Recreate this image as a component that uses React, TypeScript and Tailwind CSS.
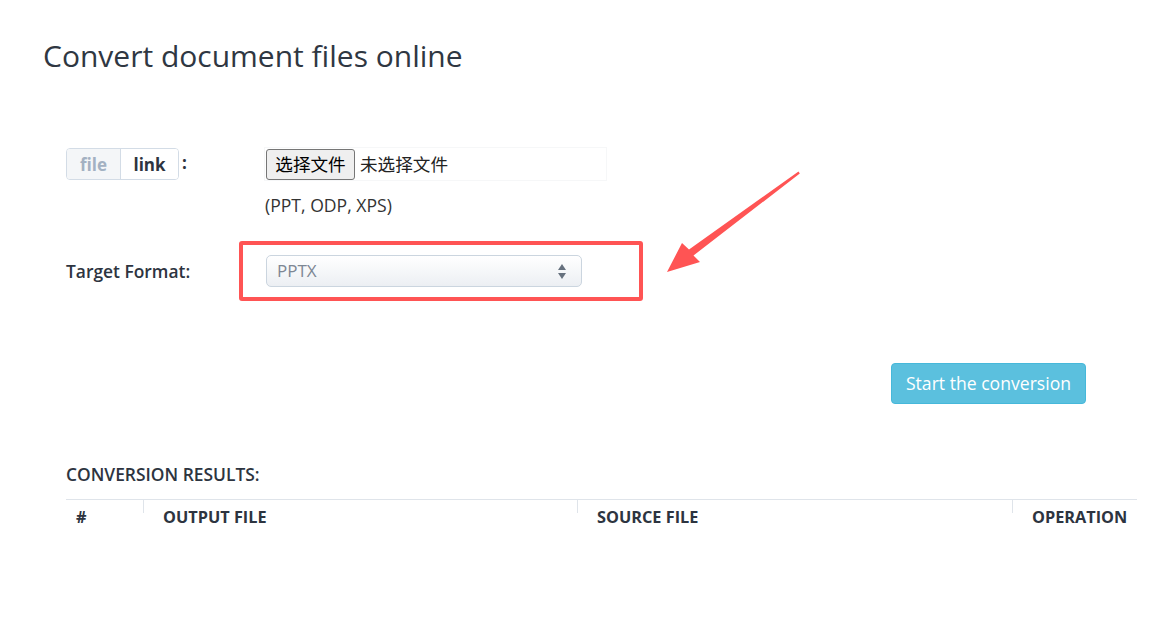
// Document converter form: upload toggle, target format picker, results table.
// The red box + arrow are screenshot annotations drawn over the page.

const font = "font-['Open_Sans','Noto_Sans_CJK_SC',sans-serif]";

function SourceToggle() {
  return (
    <div className="flex items-center">
      <div className="flex h-[32px] overflow-hidden rounded-[4px] border border-[#d3dce6] text-[17px] font-bold leading-none">
        <span className="flex w-[53px] items-center justify-center bg-[#f4f6f8] text-[#a3b1c2]">file</span>
        <span className="flex w-[58px] items-center justify-center border-l border-[#d3dce6] bg-white text-[#2d3440]">
          link
        </span>
      </div>
      <span className="ml-[3px] -mt-[3px] text-[17px] font-bold text-[#2d3440]">:</span>
    </div>
  );
}

function FileInput() {
  return (
    <div className="-ml-[2px] flex h-[34px] w-[343px] items-center border border-[#f6f7f8] pl-px">
      <span className="flex h-[31px] w-[89px] items-center justify-center rounded-[3px] border border-[#767676] bg-[#efefef] text-[17.6px] text-black">
        选择文件
      </span>
      <span className="ml-[5px] text-[17.6px] text-[#222]">未选择文件</span>
    </div>
  );
}

function FormatSelect() {
  return (
    <div className="relative">
      <div className="flex h-[32px] w-[316px] items-center justify-between rounded-[5px] border border-[#cbd5df] bg-gradient-to-b from-white to-[#eceff3] pl-[10px] pr-[14px]">
        <span className="text-[17px] text-[#7d8794]">PPTX</span>
        <svg width="10" height="17" viewBox="0 0 10 17" className="text-[#66717e]" aria-hidden>
          <path d="M5 1 L9 7 H1 Z" fill="currentColor" />
          <path d="M5 16 L9 10 H1 Z" fill="currentColor" />
        </svg>
      </div>
      {/* annotation box */}
      <div className="pointer-events-none absolute -left-[27px] -top-[14px] h-[60px] w-[404px] rounded-[3px] border-[4px] border-[#ff5454]" />
    </div>
  );
}

function ResultsHeader() {
  const cols = [
    { label: '#', w: 'w-[77px]', pl: 'pl-[10px]', line: false },
    { label: 'OUTPUT FILE', w: 'w-[434px]', pl: 'pl-[20px]', line: true },
    { label: 'SOURCE FILE', w: 'w-[435px]', pl: 'pl-[20px]', line: true },
    { label: 'OPERATION', w: 'flex-1', pl: 'pl-[20px]', line: true },
  ];
  return (
    <div className="flex border-t border-[#dfe4ea]">
      {cols.map((c) => (
        <div key={c.label} className={`relative ${c.w} ${c.pl} pt-[6px] text-[16.3px] font-bold leading-[22px] text-[#2d3440]`}>
          {c.line ? <span className="absolute left-0 top-0 h-[13px] w-px bg-[#dfe4ea]" /> : null}
          {c.label}
        </div>
      ))}
    </div>
  );
}

export default function App() {
  return (
    <div className={`relative min-h-screen bg-white ${font} text-[#333]`}>
      <h1 className="pl-[43px] pt-[38px] text-[30px] font-normal leading-[36px] text-[#2f3742]">
        Convert document files online
      </h1>

      <div className="pl-[66px] pr-[27px]">
        <div className="mt-[73px] flex items-start">
          <div className="w-[200px] pt-px">
            <SourceToggle />
          </div>
          <div className="flex flex-col">
            <FileInput />
            <p className="mt-[12px] -ml-px text-[17.6px] leading-[24px] text-[#333]">(PPT, ODP, XPS)</p>
          </div>
        </div>

        <div className="mt-[38px] flex items-center">
          <label className="w-[200px] text-[17.4px] font-semibold leading-[24px] text-[#2d3440]">Target Format:</label>
          <FormatSelect />
        </div>

        <div className="mt-[76px] flex justify-end pr-[51px]">
          <button className="h-[41px] w-[195px] rounded-[4px] border border-[#46b8da] bg-[#5bc0de] text-[17.6px] text-white">
            Start the conversion
          </button>
        </div>

        <h2 className="mt-[58px] text-[17.4px] font-semibold uppercase leading-[24px] text-[#2d3440]">
          Conversion results:
        </h2>
        <div className="mt-[13px]">
          <ResultsHeader />
        </div>
      </div>

      {/* annotation arrow */}
      <svg className="pointer-events-none absolute left-0 top-0" width="1164" height="639" aria-hidden>
        <polygon
          points="667,272 682,243 689,249.5 798.5,171.5 799.8,173.5 693.5,255.5 700,262"
          fill="#ff5454"
        />
      </svg>
    </div>
  );
}
